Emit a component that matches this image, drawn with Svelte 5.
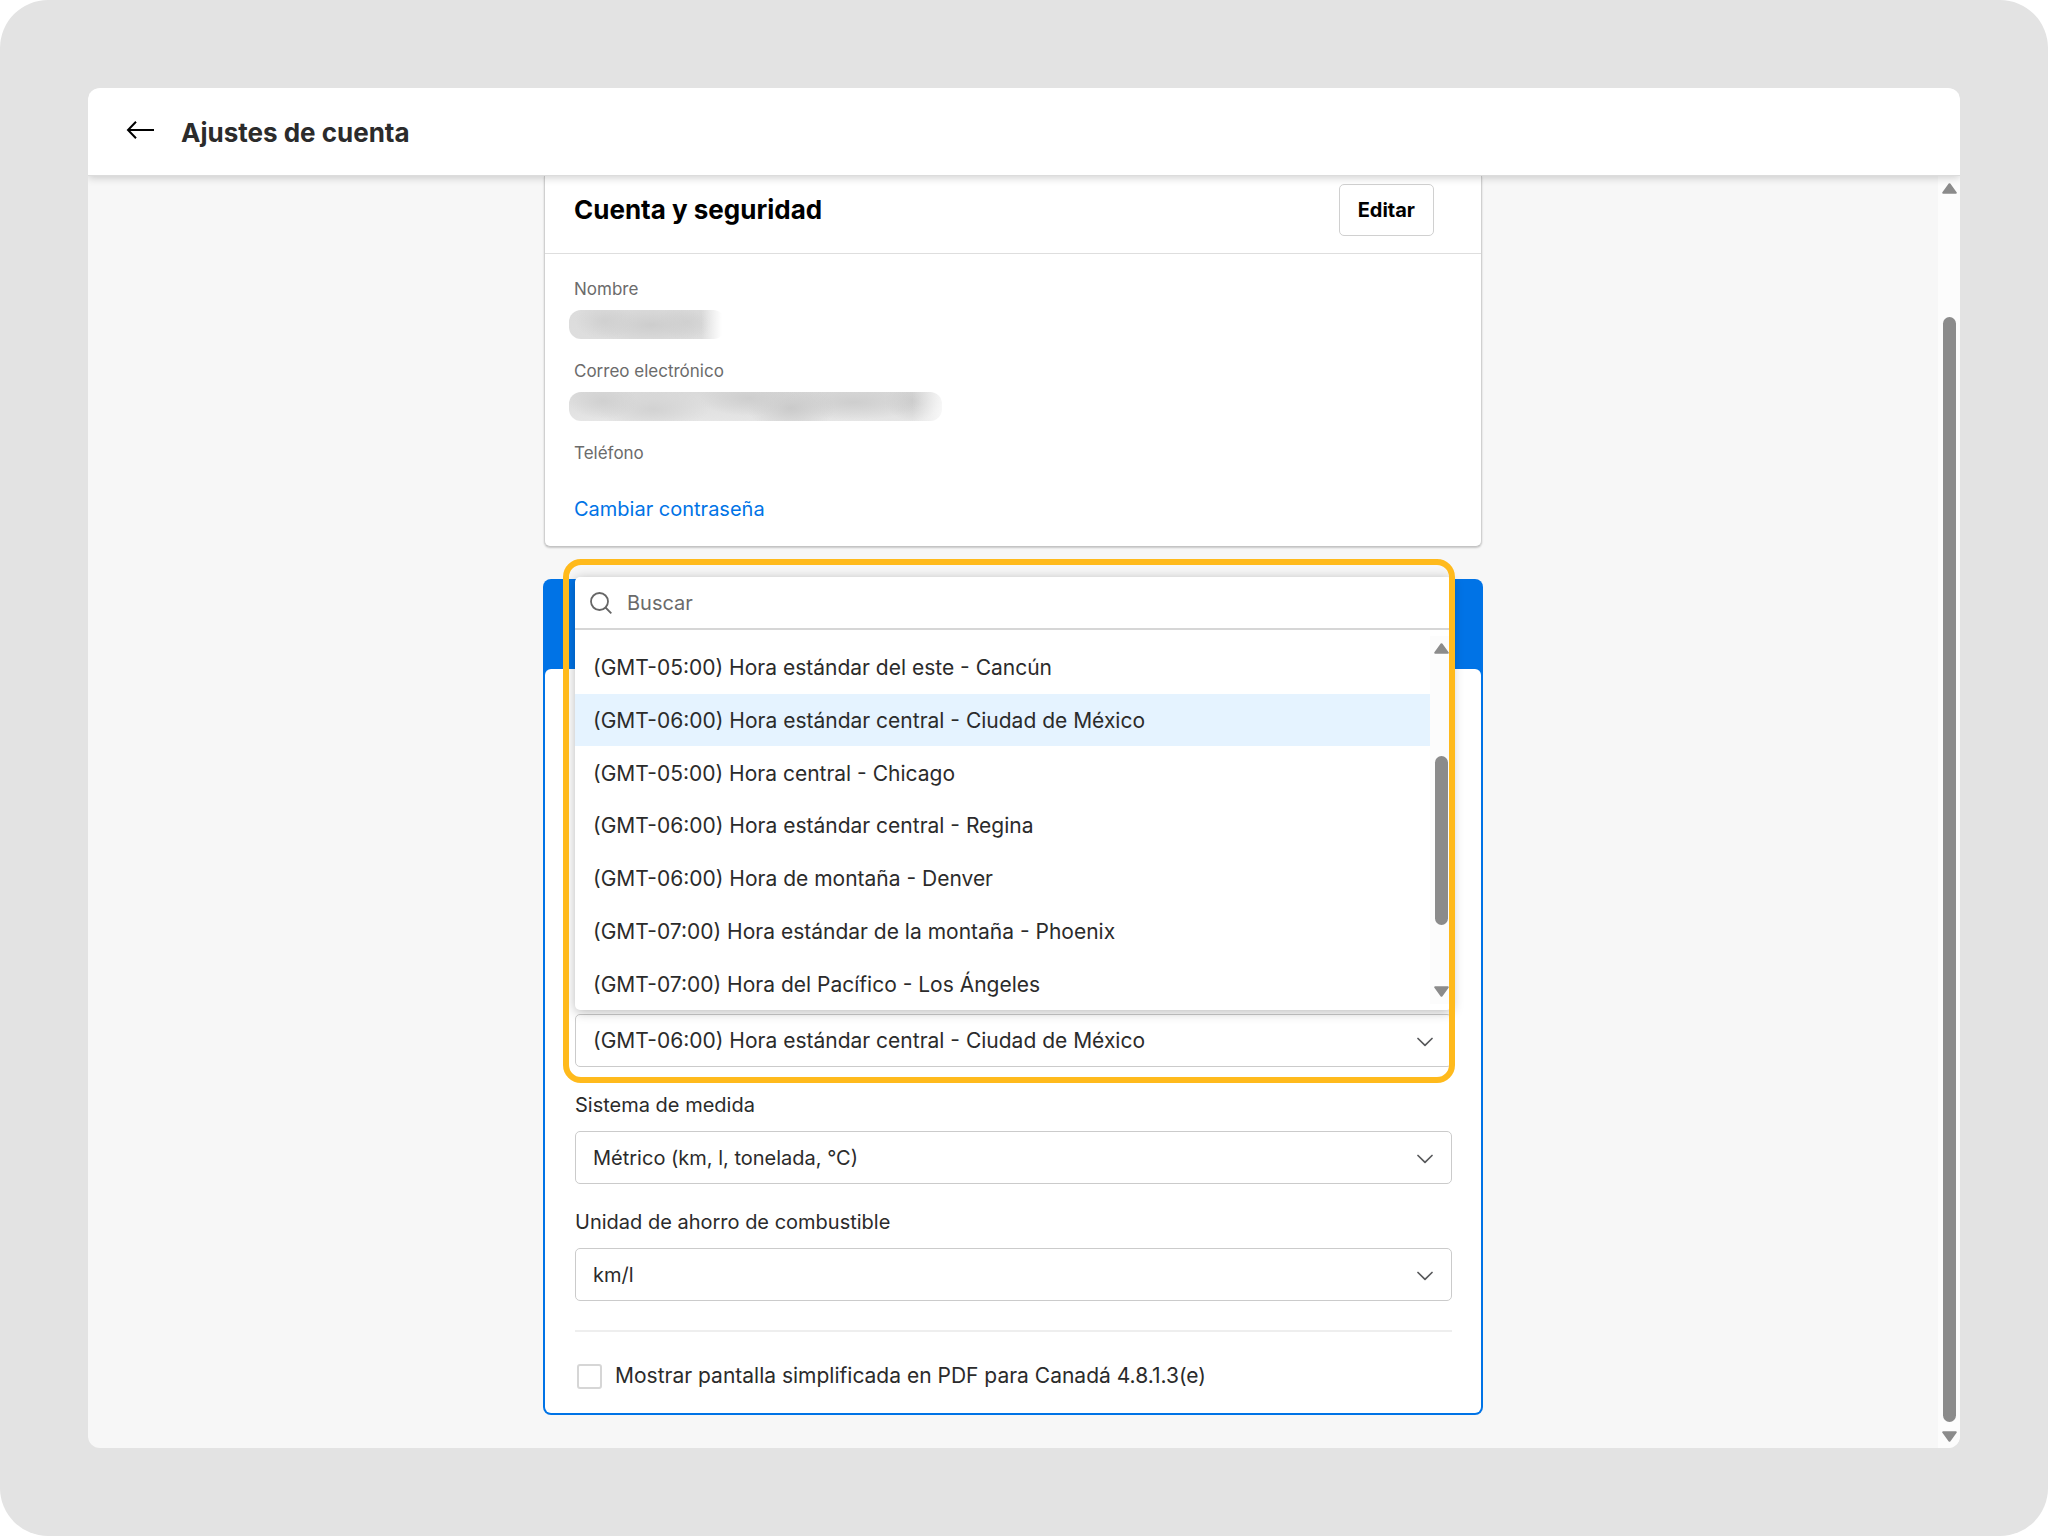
<script lang="ts">
	const zones = [
		'(GMT-05:00) Hora estándar del este - Cancún',
		'(GMT-06:00) Hora estándar central - Ciudad de México',
		'(GMT-05:00) Hora central - Chicago',
		'(GMT-06:00) Hora estándar central - Regina',
		'(GMT-06:00) Hora de montaña - Denver',
		'(GMT-07:00) Hora estándar de la montaña - Phoenix',
		'(GMT-07:00) Hora del Pacífico - Los Ángeles'
	];

	let zone = $state(zones[1]);
	let simplified = $state(false);
</script>

{#snippet chevron()}
	<svg class="chevron" viewBox="0 0 16 10" width="16" height="10" aria-hidden="true">
		<path d="M1 1.5 L8 8.3 L15 1.5" fill="none" stroke="#58595b" stroke-width="1.7" stroke-linecap="round" stroke-linejoin="round" />
	</svg>
{/snippet}

{#snippet arrow(down: boolean)}
	<svg class="arrow" class:down viewBox="0 0 15 11" width="15" height="11" aria-hidden="true">
		<path d="M7.5 1.2 L13.8 9.8 H1.2 Z" fill="#8b8b8b" stroke="#8b8b8b" stroke-width="2" stroke-linejoin="round" />
	</svg>
{/snippet}

<div class="frame">
	<div class="window">
		<header class="topbar">
			<button class="back" aria-label="Volver">
				<svg viewBox="0 0 28 20" width="28" height="20" aria-hidden="true">
					<path d="M28 10 H2 M10 1.7 L2 10 L10 18.3" fill="none" stroke="#000" stroke-width="2" />
				</svg>
			</button>
			<h1>Ajustes de cuenta</h1>
		</header>

		<div class="scroller">
			<main>
				<section class="card account">
					<div class="card-head">
						<h2>Cuenta y seguridad</h2>
						<button class="edit">Editar</button>
					</div>
					<div class="card-body">
						<dl>
							<div class="row">
								<dt>Nombre</dt>
								<dd class="redacted name"></dd>
							</div>
							<div class="row">
								<dt>Correo electrónico</dt>
								<dd class="redacted email"></dd>
							</div>
							<div class="row">
								<dt>Teléfono</dt>
							</div>
						</dl>
						<a href="#password">Cambiar contraseña</a>
					</div>
				</section>

				<section class="card prefs">
					<div class="prefs-body">
						<div class="zone">
							<div class="select">
								<select aria-label="Zona horaria" bind:value={zone}>
									{#each zones as z}
										<option>{z}</option>
									{/each}
								</select>
								{@render chevron()}
							</div>

							<div class="popover">
								<div class="search">
									<svg viewBox="0 0 22 22" width="22" height="22" aria-hidden="true">
										<circle cx="9.5" cy="9.5" r="8.5" fill="none" stroke="#666" stroke-width="1.8" />
										<path d="M15.5 15.5 L21.3 21.3" stroke="#666" stroke-width="1.8" />
									</svg>
									<input type="text" placeholder="Buscar" aria-label="Buscar" />
								</div>
								<div class="list">
									<ul role="listbox" aria-label="Zonas horarias">
										{#each zones as z}
											<li role="option" aria-selected={z === zone}>{z}</li>
										{/each}
									</ul>
									<div class="bar list-bar">
										{@render arrow(false)}
										<div class="thumb"></div>
										{@render arrow(true)}
									</div>
								</div>
							</div>

							<div class="highlight"></div>
						</div>

						<label class="field-label" for="units">Sistema de medida</label>
						<div class="select">
							<select id="units">
								<option>Métrico (km, l, tonelada, °C)</option>
							</select>
							{@render chevron()}
						</div>

						<label class="field-label" for="fuel">Unidad de ahorro de combustible</label>
						<div class="select">
							<select id="fuel">
								<option>km/l</option>
							</select>
							{@render chevron()}
						</div>

						<hr />

						<label class="check">
							<input type="checkbox" bind:checked={simplified} />
							Mostrar pantalla simplificada en PDF para Canadá 4.8.1.3(e)
						</label>
					</div>
				</section>
			</main>

			<div class="bar page-bar">
				{@render arrow(false)}
				<div class="thumb"></div>
				{@render arrow(true)}
			</div>
		</div>
	</div>
</div>

<style>
	:global(body) {
		background: #fff;
	}

	* {
		box-sizing: border-box;
	}

	.frame {
		display: flex;
		min-height: 100vh;
		padding: 88px;
		background: #e3e3e3;
		border-radius: 48px;
		font-family: Inter, 'Liberation Sans', sans-serif;
		font-size: 20px;
		line-height: 28px;
		color: #2b2b2b;
	}

	.window {
		flex: 1;
		display: flex;
		flex-direction: column;
		min-width: 0;
		background: #f7f7f7;
		border-radius: 12px;
		overflow: hidden;
	}

	button,
	input,
	select {
		font: inherit;
		color: inherit;
	}

	h1,
	h2 {
		margin: 0;
		font-size: 26px;
		font-weight: 700;
		line-height: 32px;
	}

	h2 {
		color: #000;
	}

	.topbar {
		position: relative;
		z-index: 1;
		display: flex;
		align-items: center;
		gap: 27px;
		height: 88px;
		padding: 2px 38px 0;
		background: #fff;
		border-bottom: 1px solid #dcdcdc;
		box-shadow: 0 2px 8px rgba(0, 0, 0, 0.18);
	}

	.back {
		display: flex;
		padding: 0 0 6px;
		border: 0;
		background: none;
	}

	.scroller {
		flex: 1;
		display: flex;
	}

	main {
		flex: 1;
		display: flex;
		flex-direction: column;
		align-items: center;
		gap: 32px;
		padding: 0 32px 33px;
	}

	.card {
		width: 100%;
		max-width: 940px;
		background: #fff;
		border-radius: 8px;
	}

	.account {
		max-width: 938px;
		border: 1px solid #d0d0d0;
		border-top: 0;
		border-bottom-color: #c4c4c4;
		border-radius: 0 0 6px 6px;
		box-shadow: 0 1px 2px rgba(0, 0, 0, 0.2);
	}

	.card-head {
		display: flex;
		align-items: center;
		justify-content: space-between;
		padding: 8px 47px 17px 29px;
		border-bottom: 1px solid #dedede;
	}

	.edit {
		height: 52px;
		padding: 0 18px;
		background: #fff;
		border: 1px solid #d0d0d0;
		border-radius: 5px;
		font-weight: 700;
		color: #000;
	}

	.card-body {
		padding: 23px 29px 23px;
	}

	dl {
		margin: 0 0 30px;
		display: flex;
		flex-direction: column;
		gap: 20px;
	}

	dt {
		font-size: 17px;
		line-height: 24px;
		color: #6b6b6b;
	}

	.redacted {
		height: 29px;
		margin: 9px 0 0 -5px;
		border-radius: 12px;
	}

	.name {
		width: 156px;
		background:
			linear-gradient(to right, transparent 85%, #fff 98%),
			radial-gradient(30px 18px at 36px 11px, #d0d0d0, transparent),
			radial-gradient(60px 20px at 82px 15px, #cdcdcd, transparent),
			radial-gradient(30px 18px at 118px 12px, #d2d2d2, transparent),
			linear-gradient(#dcdcdc, #dedede);
	}

	.email {
		width: 373px;
		background:
			linear-gradient(to right, transparent 92%, rgba(255, 255, 255, 0.75)),
			radial-gradient(34px 18px at 34px 9px, #d0d0d0, transparent),
			radial-gradient(56px 20px at 84px 17px, #d2d2d2, transparent),
			radial-gradient(50px 18px at 180px 6px, #cecece, transparent),
			radial-gradient(44px 24px at 222px 16px, #cacaca, transparent),
			radial-gradient(70px 18px at 284px 10px, #cecece, transparent),
			radial-gradient(28px 20px at 344px 9px, #cccccc, transparent),
			linear-gradient(#d9d9d9, #e6e6e6);
	}

	a {
		display: block;
		color: #0073e6;
		text-decoration: none;
	}

	.prefs {
		padding: 90px 2px 2px;
		background: #0073e6;
	}

	.prefs-body {
		padding: 345px 29px 23px 30px;
		background: #fff;
		border-radius: 6px;
	}

	.zone {
		position: relative;
	}

	.zone select,
	.zone li,
	.check {
		font-size: 21px;
	}

	.select {
		position: relative;
	}

	select {
		display: block;
		width: 100%;
		height: 53px;
		padding: 0 48px 0 17px;
		appearance: none;
		background: #fff;
		border: 1px solid #cbcbcb;
		border-radius: 5px;
	}

	.chevron {
		position: absolute;
		top: 23px;
		right: 19px;
		pointer-events: none;
	}

	/* opens upwards, over the blue card head */
	.popover {
		position: absolute;
		right: 0;
		bottom: calc(100% + 4px);
		left: 0;
		background: #fff;
		border-radius: 5px;
		box-shadow: 0 2px 12px rgba(0, 0, 0, 0.28);
	}

	.search {
		display: flex;
		align-items: center;
		gap: 15px;
		height: 53px;
		padding: 0 15px;
		border-bottom: 2px solid #d6d6d6;
	}

	.search input {
		flex: 1;
		padding: 0;
		border: 0;
		background: none;
		outline: none;
	}

	.search input::placeholder {
		color: #6b6b6b;
		opacity: 1;
	}

	.list {
		display: flex;
		height: 380px;
		padding: 6px 0 0;
	}

	ul {
		flex: 1;
		display: grid;
		grid-auto-rows: 1fr;
		margin: 0;
		padding: 5px 0 0;
		list-style: none;
	}

	li {
		display: flex;
		align-items: center;
		padding: 2px 0 0 18px;
	}

	li[aria-selected='true'] {
		background: #e5f3ff;
	}

	.bar {
		display: flex;
		flex-direction: column;
		align-items: center;
		background: #fcfcfc;
	}

	.bar .thumb {
		width: 13px;
		flex: 1;
		background: #8b8b8b;
		border-radius: 7px;
	}

	.arrow.down {
		transform: rotate(180deg);
	}

	.list-bar {
		width: 22px;
		margin-bottom: 6px;
		padding: 7px 0;
	}

	.list-bar .thumb {
		margin: 102px 0 61px;
	}

	.page-bar {
		width: 22px;
		padding: 7px 0 6px;
	}

	.page-bar .thumb {
		margin: 123px 0 9px;
	}

	/* ring round the open control and its list */
	.highlight {
		position: absolute;
		inset: -455px -3px -16px -12px;
		border: 6px solid #ffba1c;
		border-radius: 18px;
		pointer-events: none;
	}

	.field-label {
		display: block;
		padding: 24px 0 12px;
	}

	hr {
		height: 2px;
		margin: 29px 0 30px;
		border: 0;
		background: #eee;
	}

	.check {
		display: flex;
		align-items: center;
		gap: 13px;
	}

	.check input {
		width: 25px;
		height: 25px;
		margin: 0 0 0 2px;
		appearance: none;
		background: #fff;
		border: 2px solid #d6d6d6;
		border-radius: 3px;
	}

	.check input:checked {
		background: #0073e6;
		border-color: #0073e6;
	}
</style>
